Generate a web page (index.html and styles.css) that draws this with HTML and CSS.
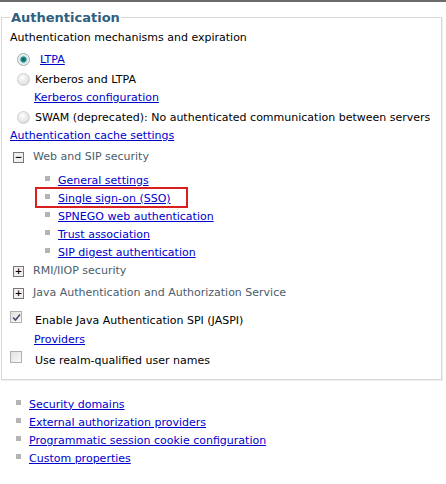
FILE: index.html
```html
<!DOCTYPE html>
<html lang="en">
<head>
    <meta charset="UTF-8">
    <title>Authentication</title>
    <link rel="stylesheet" href="styles.css">
</head>
<body>
    <div class="top-bar"></div>

    <fieldset class="auth">
        <legend>Authentication</legend>
        <div class="line intro">Authentication mechanisms and expiration</div>

        <div class="radio-row first">
            <span class="radio checked"></span>
            <a href="#">LTPA</a>
        </div>
        <div class="radio-row">
            <span class="radio"></span>
            <span>Kerberos and LTPA</span>
        </div>
        <div class="sub-link"><a href="#">Kerberos configuration</a></div>
        <div class="radio-row">
            <span class="radio"></span>
            <span>SWAM (deprecated): No authenticated communication between servers</span>
        </div>
        <div class="line"><a href="#">Authentication cache settings</a></div>

        <div class="tree-row open">
            <span class="toggle">&minus;</span>
            <span>Web and SIP security</span>
        </div>
        <ul class="links nested">
            <li><a href="#">General settings</a></li>
            <li class="marked"><a href="#">Single sign-on (SSO)</a></li>
            <li><a href="#">SPNEGO web authentication</a></li>
            <li><a href="#">Trust association</a></li>
            <li><a href="#">SIP digest authentication</a></li>
        </ul>

        <div class="tree-row">
            <span class="toggle">+</span>
            <span>RMI/IIOP security</span>
        </div>
        <div class="tree-row">
            <span class="toggle">+</span>
            <span>Java Authentication and Authorization Service</span>
        </div>

        <div class="check-row">
            <span class="check checked">
                <svg width="9" height="9" viewBox="0 0 9 9"><path d="M1 4.5 L3.5 7 L8 1.5" fill="none" stroke="#4b4b6b" stroke-width="1.6"/></svg>
            </span>
            <span>Enable Java Authentication SPI (JASPI)</span>
        </div>
        <div class="sub-link"><a href="#">Providers</a></div>
        <div class="check-row last">
            <span class="check"></span>
            <span>Use realm-qualified user names</span>
        </div>
    </fieldset>

    <ul class="links outer">
        <li><a href="#">Security domains</a></li>
        <li><a href="#">External authorization providers</a></li>
        <li><a href="#">Programmatic session cookie configuration</a></li>
        <li><a href="#">Custom properties</a></li>
    </ul>
</body>
</html>
```

FILE: styles.css
```css
body {
    margin: 0;
    background: #fff;
    font-family: "DejaVu Sans", Verdana, sans-serif;
    font-size: 11px;
    color: #000;
}

a {
    color: #0000cc;
    text-decoration: underline;
}

.top-bar {
    height: 2px;
    background: #6b6b6b;
    margin-bottom: 8px;
}

.auth {
    margin: 0 4px 0 1px;
    padding: 0 8px 8px 8px;
    border: 1px solid #d8d8d8;
    box-shadow: 1px 1px 0 #eee;
}

legend {
    padding: 0 1px;
    font-size: 13px;
    font-weight: bold;
    color: #2f5f80;
}

.line {
    height: 18px;
    line-height: 18px;
}
.line.intro {
    margin-top: 4px;
    margin-bottom: 2px;
}

.radio-row {
    display: flex;
    align-items: center;
    gap: 5px;
    height: 20px;
    margin-left: 7px;
}
.radio-row.first {
    gap: 10px;
}

.radio {
    width: 13px;
    height: 13px;
    border-radius: 50%;
    background: radial-gradient(circle at 40% 35%, #fff, #e4e4e4 60%, #c8c8c8);
    border: 1px solid #d0d0d0;
    box-sizing: border-box;
}
.radio.checked {
    border-color: #9aa;
    background: radial-gradient(circle at 50% 50%, #0a5a5a 0, #1f8c8c 2.5px, #bfe0e0 3.5px, #f4f4f4 5px);
}

.sub-link {
    height: 18px;
    line-height: 18px;
    margin-left: 24px;
}

.tree-row {
    display: flex;
    align-items: center;
    gap: 9px;
    height: 22px;
    margin-left: 3px;
    color: #4a5d6a;
}

.toggle {
    width: 9px;
    height: 9px;
    border: 1px solid #777;
    background: #f0f0f0;
    font-size: 9px;
    line-height: 8px;
    text-align: center;
    font-weight: bold;
    color: #000;
    margin-top: 3px;
}

.links {
    list-style: none;
    margin: 0;
    padding: 0;
}
.links li {
    display: flex;
    align-items: center;
    gap: 8px;
    height: 18px;
}
.links li::before {
    content: '';
    width: 5px;
    height: 5px;
    background: #b4b4b4;
    margin-top: -3px;
}

.nested {
    margin: 4px 0 -2px 35px;
}

.marked {
    position: relative;
}
.marked::after {
    content: '';
    position: absolute;
    left: -10px;
    top: -2px;
    width: 149px;
    height: 17px;
    border: 2px solid #d92020;
}

.check-row {
    display: flex;
    align-items: center;
    gap: 13px;
    height: 22px;
    margin-top: 6px;
}
.check-row.last {
    margin-top: 0;
}

.check {
    width: 12px;
    height: 12px;
    border: 1px solid #b0b0b0;
    background: linear-gradient(135deg, #e0e0e0, #fafafa);
    box-sizing: border-box;
    display: flex;
    align-items: center;
    justify-content: center;
    margin-top: -6px;
}

.outer {
    margin: 15px 0 0 16px;
}
```
